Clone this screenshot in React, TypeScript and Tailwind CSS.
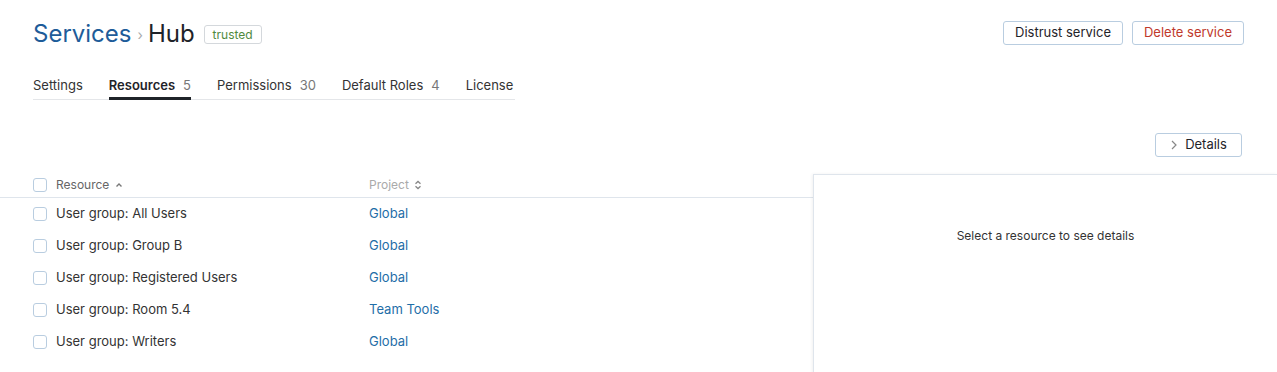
import React from 'react';

const rows = [
  { name: 'User group: All Users', project: 'Global' },
  { name: 'User group: Group B', project: 'Global' },
  { name: 'User group: Registered Users', project: 'Global' },
  { name: 'User group: Room 5.4', project: 'Team Tools' },
  { name: 'User group: Writers', project: 'Global' },
];

const tabs = [
  { label: 'Settings' },
  { label: 'Resources', count: '5', active: true },
  { label: 'Permissions', count: '30' },
  { label: 'Default Roles', count: '4' },
  { label: 'License' },
];

function Checkbox() {
  return <span className="block w-[14px] h-[14px] rounded-[3px] border border-[#b9cde0] bg-white shrink-0"></span>;
}

export default function App() {
  return (
    <div className="w-[1277px] h-[372px] overflow-hidden bg-white text-[13px] text-[#333]" style={{ fontFamily: "Inter, 'Noto Sans', sans-serif" }}>
      {/* Header */}
      <div className="flex items-start justify-between pl-[33px] pr-[33px] pt-[18px]">
        <div className="flex items-center h-[31px]">
          <span className="text-[24px] text-[#1e5c99] leading-none">Services</span>
          <span className="text-[14px] text-[#aaa] ml-[6px] mr-[5px] leading-none mt-[3px]">›</span>
          <span className="text-[24px] text-[#1f2329] leading-none">Hub</span>
          <span className="ml-[9px] h-[19px] px-[8px] flex items-center border border-[#d4d8dc] rounded-[3px] text-[12px] text-[#4f8a3e] mt-[2px]">trusted</span>
        </div>
        <div className="flex items-center gap-[9px] pt-[3px]">
          <button className="h-[24px] w-[120px] border border-[#b9cde0] rounded-[3px] text-[13px] text-[#1f2329] bg-white">Distrust service</button>
          <button className="h-[24px] w-[112px] border border-[#b9cde0] rounded-[3px] text-[13px] text-[#c0392b] bg-white">Delete service</button>
        </div>
      </div>

      {/* Tabs */}
      <div className="pl-[33px] mt-[22px]">
        <div className="flex w-[482px] border-b border-[#e4e6e9] gap-[26px] h-[29px] whitespace-nowrap">
          {tabs.map(t => (
            <div key={t.label} className={`flex shrink-0 items-start pt-[5px] h-[29px] ${t.active ? 'border-b-[3px] border-[#1f2329]' : ''}`}>
              <span className={t.active ? 'font-semibold text-[#1f2329]' : 'text-[#333]'}>{t.label}</span>
              {t.count && <span className="ml-[8px] text-[#777]">{t.count}</span>}
            </div>
          ))}
        </div>
      </div>

      {/* Toolbar */}
      <div className="flex justify-end pr-[35px] mt-[33px]">
        <button className="h-[24px] w-[87px] border border-[#b9cde0] rounded-[3px] bg-white flex items-center justify-center gap-[7px] text-[13px] text-[#1f2329]">
          <svg width="8" height="10" viewBox="0 0 8 10" fill="none" stroke="#888" strokeWidth="1.2">
            <path d="M2 1l4 4-4 4" />
          </svg>
          Details
        </button>
      </div>

      {/* Content */}
      <div className="flex mt-[15px]">
        <div className="w-[813px] shrink-0">
          <div className="flex items-center h-[26px] border-b border-[#dfe5ec] pl-[33px]">
            <Checkbox />
            <span className="ml-[9px] text-[12px] text-[#666] flex items-center gap-[6px] w-[313px]">
              Resource
              <svg width="8" height="6" viewBox="0 0 8 6" fill="none" stroke="#777" strokeWidth="1.4">
                <path d="M1.5 4.5L4 2l2.5 2.5" />
              </svg>
            </span>
            <span className="text-[12px] text-[#aaa] flex items-center gap-[5px]">
              Project
              <svg width="8" height="10" viewBox="0 0 8 10" fill="none" stroke="#888" strokeWidth="1.3">
                <path d="M1.5 3.8L4 1.5l2.5 2.3M1.5 6.2L4 8.5l2.5-2.3" />
              </svg>
            </span>
          </div>
          {rows.map(r => (
            <div key={r.name} className="flex items-center h-[32px] pl-[33px]">
              <Checkbox />
              <span className="ml-[9px] w-[313px] text-[#333]">{r.name}</span>
              <span className="text-[#1f6ea8]">{r.project}</span>
            </div>
          ))}
        </div>
        <div className="flex-1 mt-[2px] h-[260px] border-l border-t border-[#dfe5ec] shadow-[-1px_0_3px_rgba(0,0,0,0.06)] flex justify-center pt-[52px]">
          <span className="text-[12px] text-[#333]">Select a resource to see details</span>
        </div>
      </div>
    </div>
  );
}
